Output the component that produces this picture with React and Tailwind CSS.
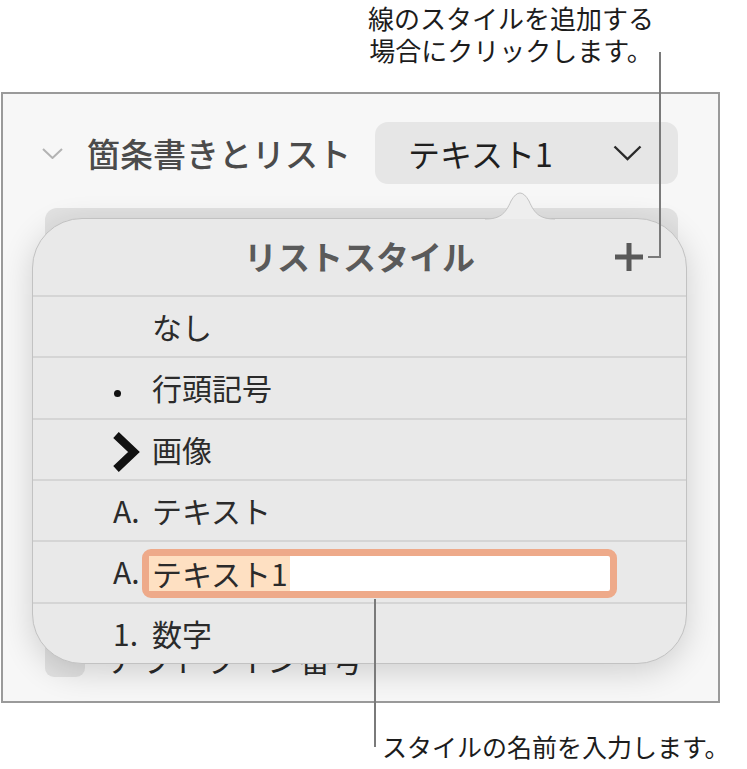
import React from "react";

function Marker({ kind }) {
  if (kind === "bullet") {
    return (
      <div className="w-[39px] flex">
        <div className="ml-[1px] mt-[12px] w-[7px] h-[7px] rounded-full bg-[#111]" />
      </div>
    );
  }
  if (kind === "image") {
    return (
      <div className="w-[39px] flex">
        <svg className="w-[28px] h-[40px] mt-[6px]" viewBox="0 0 28 40">
          <polyline points="3,3 21,20 3,37" fill="none" stroke="#111" strokeWidth="8" strokeLinejoin="miter" />
        </svg>
      </div>
    );
  }
  return <div className="w-[39px] text-[30px] text-[#2b2b2b]">{kind}</div>;
}

export default function App() {
  const rows = [
    { marker: "", label: "なし" },
    { marker: "bullet", label: "行頭記号" },
    { marker: "image", label: "画像" },
    { marker: "A.", label: "テキスト" },
  ];

  return (
    <div className="relative w-[747px] h-[769px] bg-white overflow-hidden font-['Noto_Sans_CJK_JP',sans-serif]">
      {/* top callout text */}
      <div className="h-[92px] pt-[2px]">
        <p className="ml-[355px] w-[312px] text-center text-[26px] leading-[32px] text-[#1c1c1c]">
          線のスタイルを追加する
          <br />
          場合にクリックします。
        </p>
      </div>

      {/* sidebar panel */}
      <div className="relative ml-[1px] w-[719px] h-[611px] border-2 border-[#9a9a9a] bg-[#f7f7f7] flex flex-col">
        <div className="flex items-center mt-[28px] h-[62px]">
          <svg className="ml-[39px] w-[21px] h-[11px]" viewBox="0 0 21 11">
            <polyline points="1,1 10.5,10 20,1" fill="none" stroke="#b3b3b3" strokeWidth="2" />
          </svg>
          <span className="ml-[24px] text-[33px] font-medium leading-none text-[#4b4b4b]">箇条書きとリスト</span>
          <div className="ml-auto mr-[40px] w-[303px] h-[62px] rounded-[13px] bg-[#e6e6e6] flex items-center pl-[33px] pr-[36px]">
            <span className="text-[32px] leading-none text-[#1f1f1f]">テキスト1</span>
            <svg className="ml-auto w-[29px] h-[16px]" viewBox="0 0 29 16">
              <polyline points="1.5,1.5 14.5,14 27.5,1.5" fill="none" stroke="#2a2a2a" strokeWidth="2.4" />
            </svg>
          </div>
        </div>

        <div className="mt-[24px] ml-[42px] w-[633px] h-[60px] rounded-[12px] bg-[#e2e2e2]" />

        <div className="mt-auto mb-[24px] flex items-end">
          <div className="ml-[42px] w-[40px] h-[40px] rounded-[9px] bg-[#e2e2e2]" />
          <span className="ml-[22px] text-[32px] leading-[38px] text-[#2a2a2a]">アウトライン番号</span>
        </div>

        {/* list style popover */}
        <div className="absolute left-[29px] top-[124px] w-[655px] h-[446px] z-10">
          <div className="h-full rounded-[50px] border border-[#c2c2c2] bg-[#e9e9e9] shadow-[0_8px_32px_rgba(0,0,0,0.16)] overflow-hidden flex flex-col">
            <div className="h-[76px] shrink-0 grid grid-cols-[1fr_auto_1fr] items-center">
              <div />
              <span className="text-[33px] font-semibold text-[#5a5a5a]">リストスタイル</span>
              <svg className="justify-self-end mr-[42px] w-[30px] h-[30px]" viewBox="0 0 30 30">
                <path d="M15 1 V29 M1 15 H29" stroke="#595959" strokeWidth="5" />
              </svg>
            </div>
            {rows.map((r) => (
              <div key={r.label} className="flex-1 border-t-2 border-[#d5d5d5] flex items-center pl-[80px]">
                <Marker kind={r.marker} />
                <span className="text-[30px] text-[#2b2b2b]">{r.label}</span>
              </div>
            ))}
            <div className="flex-1 border-t-2 border-[#d5d5d5] flex items-center pl-[80px]">
              <span className="w-[29px] text-[30px] text-[#2b2b2b]">A.</span>
              <div className="w-[475px] h-[49px] mt-[4px] rounded-[9px] border-[7px] border-[#eeaa8a] bg-white flex">
                <span className="h-full pl-[3px] pr-[2px] bg-[#fee0c2] text-[30px] leading-[35px] text-[#2b2b2b]">テキスト1</span>
              </div>
            </div>
            <div className="flex-1 border-t-2 border-[#d5d5d5] flex items-center pl-[80px]">
              <Marker kind="1." />
              <span className="text-[30px] text-[#2b2b2b]">数字</span>
            </div>
          </div>
          <svg className="absolute left-[453px] -top-[29px] w-[70px] h-[31px]" viewBox="0 0 70 31">
            <path d="M0 30 C14 30 20 26 26 12 Q35 -4 44 12 C50 26 56 30 70 30 Z" fill="#eeeeee" />
            <path d="M0 30 C14 30 20 26 26 12 Q35 -4 44 12 C50 26 56 30 70 30" fill="none" stroke="#c2c2c2" strokeWidth="1" />
          </svg>
        </div>
      </div>

      {/* bottom callout text */}
      <div className="pl-[382px] pt-[28px]">
        <p className="text-[25px] leading-[30px] text-[#1c1c1c]">スタイルの名前を入力します。</p>
      </div>

      {/* callout lines */}
      <div className="absolute left-[659px] top-[52px] w-[2px] h-[206px] bg-[#7a7a7a] z-20" />
      <div className="absolute left-[648px] top-[256px] w-[13px] h-[2px] bg-[#7a7a7a] z-20" />
      <div className="absolute left-[374px] top-[599px] w-[2px] h-[148px] bg-[#7a7a7a] z-20" />
    </div>
  );
}
